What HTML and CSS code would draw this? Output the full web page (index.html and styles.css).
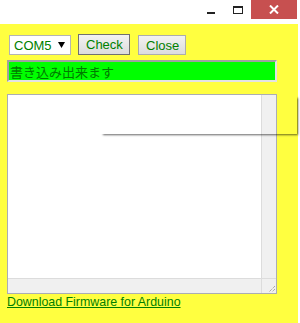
FILE: index.html
```html
<!DOCTYPE html>
<html lang="ja">
<head>
<meta charset="utf-8">
<title>Firmware Writer</title>
<link rel="stylesheet" href="styles.css">
</head>
<body>
<div class="window">
  <div class="titlebar">
    <div class="tb-btn tb-min"><span class="min-icon"></span></div>
    <div class="tb-btn tb-max"><span class="max-icon"></span></div>
    <div class="tb-btn tb-close">
      <svg width="10" height="9" viewBox="0 0 10 9"><path d="M1 0.5 L9 8.5 M9 0.5 L1 8.5" stroke="#fff" stroke-width="2"/></svg>
    </div>
  </div>
  <div class="content">
    <div class="row">
      <div class="select-box">
        <select class="port"><option>COM5</option></select>
        <svg class="arrow" width="7" height="6" viewBox="0 0 7 6"><path d="M0 0 H7 L3.5 6 Z" fill="#000"/></svg>
      </div>
      <button class="btn btn-focus">Check</button>
      <button class="btn">Close</button>
    </div>
    <input class="status" type="text" value="書き込み出来ます">
    <div class="log">
      <div class="log-body"></div>
      <div class="vscroll"></div>
      <div class="hscroll"></div>
      <div class="corner">
        <svg width="10" height="10" viewBox="0 0 10 10"><path d="M9 3 L3 9 M9 6 L6 9" stroke="#888" stroke-width="1" stroke-dasharray="1 1"/></svg>
      </div>
    </div>
    <a class="dl" href="#">Download Firmware for Arduino</a>
  </div>
  <div class="shadow"></div>
</div>
</body>
</html>
```
FILE: styles.css
```css
html, body {
  margin: 0;
  padding: 0;
  background: #ffffff;
  width: 300px;
  height: 323px;
  overflow: hidden;
}
.window {
  position: relative;
  width: 298px;
  height: 323px;
  background: #ffff40;
  font-family: "Liberation Sans", Arial, "Noto Sans CJK JP", sans-serif;
  font-size: 13px;
  color: #008000;
}
.titlebar {
  height: 24px;
  background: #ffffff;
  display: flex;
  justify-content: flex-end;
  align-items: flex-start;
  padding-right: 1px;
}
.tb-btn {
  height: 19px;
  display: flex;
  align-items: center;
  justify-content: center;
}
.tb-min { width: 26px; margin-right: 1px; }
.tb-max { width: 26px; }
.tb-close { width: 46px; background: #c75050; }
.min-icon {
  width: 8px;
  height: 2px;
  background: #222;
  margin-top: 6px;
}
.max-icon {
  width: 8px;
  height: 5px;
  border: 1px solid #222;
  border-top-width: 2px;
}
.content {
  padding: 10px 21px 0 7px;
  display: flex;
  flex-direction: column;
  align-items: flex-start;
}
.row {
  display: flex;
  align-items: flex-start;
  margin-left: 2px;
}
.select-box {
  width: 60px;
  height: 18px;
  margin-top: 1px;
  background: #fff;
  border: 1px solid #b4b4b4;
  display: flex;
  align-items: center;
}
.port {
  appearance: none;
  -webkit-appearance: none;
  border: none;
  background: transparent;
  font: inherit;
  color: #008000;
  padding: 0 0 0 4px;
  margin: 0;
  width: 46px;
  outline: none;
}
.arrow { margin-left: 2px; }
.btn {
  font: inherit;
  color: #008000;
  height: 21px;
  margin: 0 0 0 7px;
  padding: 0 7px;
  border: 1px solid #acacac;
  border-radius: 0;
  background: linear-gradient(#f2f2f2, #dcdcdc);
}
.btn-focus { border-color: #707070; width: 52px; }
.btn + .btn { margin-left: 8px; width: 48px; height: 20px; margin-top: 1px; }
.status {
  box-sizing: border-box;
  width: 270px;
  height: 22px;
  margin: 5px 0 0 0;
  padding: 0 0 0 1px;
  border-style: solid;
  border-width: 2px;
  border-color: #a0a0a0 #e3e3e3 #e3e3e3 #a0a0a0;
  background: #00ff00;
  color: #007a00;
  font-family: "Noto Sans CJK JP", sans-serif;
  font-size: 13px;
  outline: none;
}
.log {
  box-sizing: border-box;
  width: 270px;
  height: 200px;
  margin-top: 12px;
  border: 1px solid #abadb3;
  background: #fff;
  display: grid;
  grid-template-columns: 1fr 15px;
  grid-template-rows: 1fr 15px;
}
.log-body { background: #fff; }
.vscroll { background: #f0f0f0; border-left: 1px solid #dcdcdc; }
.hscroll { background: #f0f0f0; border-top: 1px solid #dcdcdc; }
.corner {
  background: #f0f0f0;
  border-top: 1px solid #dcdcdc;
  border-left: 1px solid #dcdcdc;
  display: flex;
  align-items: flex-end;
  justify-content: flex-end;
}
.dl {
  color: #008000;
  text-decoration: underline;
  margin-top: 1px;
  line-height: 15px;
  font-size: 12.4px;
}
.shadow {
  position: absolute;
  left: 100px;
  top: 95px;
  width: 197px;
  height: 39px;
  box-shadow: 2px 2px 2px -1px rgba(0, 0, 0, 0.6);
}
```
